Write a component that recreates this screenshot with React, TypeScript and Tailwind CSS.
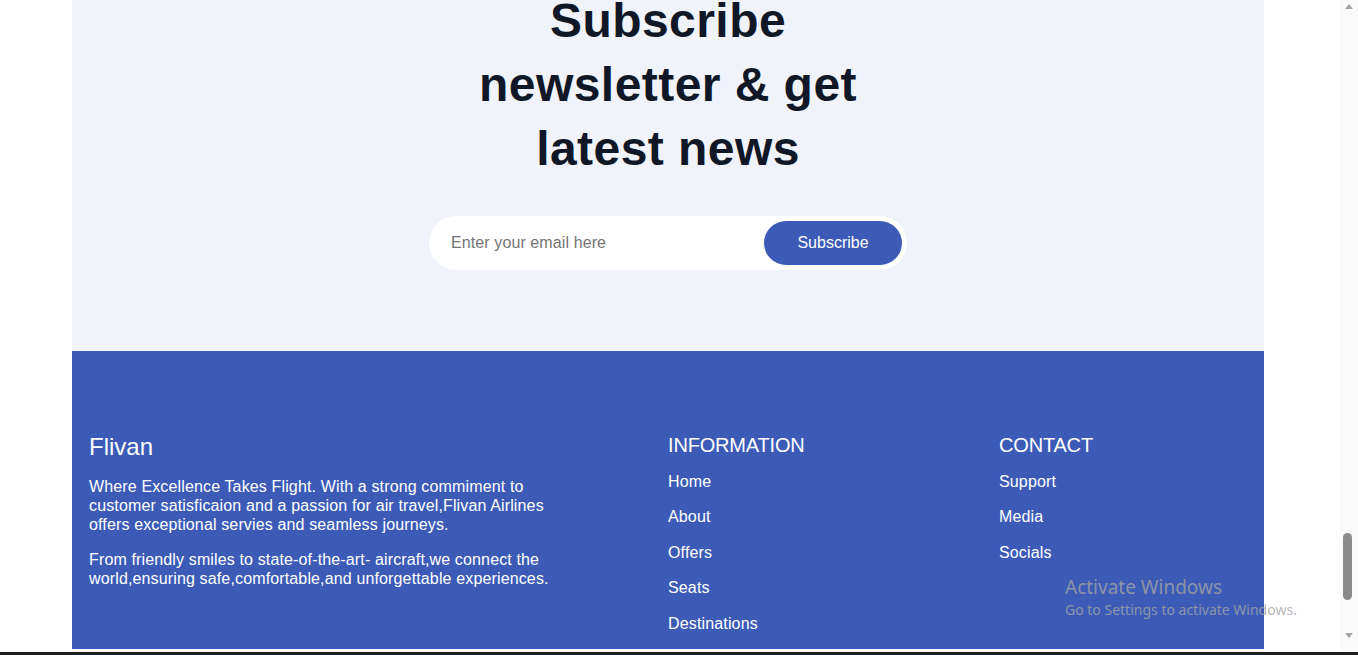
const infoLinks = ["Home", "About", "Offers", "Seats", "Destinations"];
const contactLinks = ["Support", "Media", "Socials"];

function LinkColumn({ title, links }: { title: string; links: string[] }) {
  return (
    <div>
      <h3 className="mb-[14px] text-xl tracking-[-0.18px]">{title}</h3>
      <ul className="flex flex-col gap-[17px]">
        {links.map((l) => (
          <li key={l} className="text-base leading-[1.15] tracking-[0.15px]">
            <a href="#">{l}</a>
          </li>
        ))}
      </ul>
    </div>
  );
}

export default function App() {
  return (
    <div className="relative flex h-[655px] overflow-hidden bg-white font-['Liberation_Sans',Arial,sans-serif]">
      <div className="flex-1 overflow-hidden">
        <div className="ml-[72px] w-[1192px]">
          {/* newsletter */}
          <section className="flex flex-col items-center overflow-hidden bg-[#f0f3f9] pb-[81px]">
            <h2 className="-mt-[11px] max-w-md text-center text-[48px] font-bold leading-[64px] tracking-[0.45px] text-[#101828]">
              Subscribe newsletter &amp; get latest news
            </h2>
            <form
              className="mt-[35px] flex h-[54px] w-[478px] items-center rounded-full bg-white p-[5px]"
              onSubmit={(e) => e.preventDefault()}
            >
              <input
                type="email"
                placeholder="Enter your email here"
                className="min-w-0 flex-1 bg-transparent pl-[17px] text-base tracking-[0.1px] text-gray-800 outline-none placeholder:text-[#757575]"
              />
              <button className="h-[44px] w-[138px] rounded-full bg-[#3c5bb7] text-base text-white">
                Subscribe
              </button>
            </form>
          </section>

          {/* footer */}
          <footer className="grid grid-cols-[2fr_1fr_1fr] gap-x-[83px] bg-[#3c5bb7] px-[17px] pb-[16px] pt-[80px] text-white">
            <div>
              <h3 className="mb-[14px] text-2xl">Flivan</h3>
              <p className="max-w-[472px] text-base leading-[19px] tracking-[0.14px]">
                Where Excellence Takes Flight. With a strong commiment to customer satisficaion and a passion for air
                travel,Flivan Airlines offers exceptional servies and seamless journeys.
              </p>
              <p className="mt-4 max-w-[472px] text-base leading-[19px] tracking-[0.14px]">
                From friendly smiles to state-of-the-art- aircraft,we connect the world,ensuring
                safe,comfortable,and unforgettable experiences.
              </p>
            </div>
            <LinkColumn title="INFORMATION" links={infoLinks} />
            <LinkColumn title="CONTACT" links={contactLinks} />
          </footer>
        </div>
      </div>

      {/* scrollbar */}
      <div className="relative w-[18px] bg-[#fafafa]">
        <svg className="absolute left-[5px] top-[4px]" width="8" height="5" viewBox="0 0 8 5">
          <path d="M0 5 L4 0 L8 5 Z" fill="#a3a3a3" />
        </svg>
        <div className="absolute left-[3px] top-[533px] h-[67px] w-[9px] rounded-full bg-[#8b8b8b]" />
        <svg className="absolute left-[5px] top-[633px]" width="8" height="5" viewBox="0 0 8 5">
          <path d="M0 0 L4 5 L8 0 Z" fill="#a3a3a3" />
        </svg>
      </div>

      {/* windows watermark */}
      <div className="pointer-events-none absolute left-[1065px] top-[574px] font-['Noto_Sans',sans-serif] text-[#a3a3a3]/80">
        <div className="text-[19px] leading-[26px]">Activate Windows</div>
        <div className="text-[14px] leading-[19px]">Go to Settings to activate Windows.</div>
      </div>

      {/* taskbar edge */}
      <div className="absolute bottom-0 left-0 h-[3px] w-full bg-[#1e1e1e]" />
    </div>
  );
}
